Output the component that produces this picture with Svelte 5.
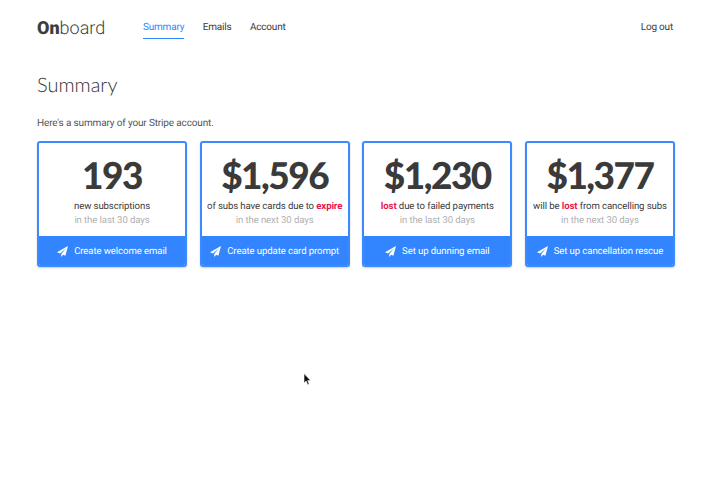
<script>
    const cards = [
        { value: '193', before: 'new subscriptions', hot: '', after: '', when: 'in the last 30 days', action: 'Create welcome email' },
        { value: '$1,596', before: 'of subs have cards due to ', hot: 'expire', after: '', when: 'in the next 30 days', action: 'Create update card prompt' },
        { value: '$1,230', before: '', hot: 'lost', after: ' due to failed payments', when: 'in the last 30 days', action: 'Set up dunning email' },
        { value: '$1,377', before: 'will be ', hot: 'lost', after: ' from cancelling subs', when: 'in the next 30 days', action: 'Set up cancellation rescue' }
    ];
</script>

<div class="page">
    <header>
        <div class="logo"><b>On</b>board</div>
        <nav>
            <a class="active" href="#summary">Summary</a>
            <a href="#emails">Emails</a>
            <a href="#account">Account</a>
        </nav>
        <a class="logout" href="#logout">Log out</a>
    </header>

    <h1>Summary</h1>
    <p class="intro">Here's a summary of your Stripe account.</p>

    <div class="cards">
        {#each cards as card}
            <div class="card">
                <div class="body">
                    <div class="value">{card.value}</div>
                    <div class="desc">{card.before}{#if card.hot}<strong>{card.hot}</strong>{/if}{card.after}</div>
                    <div class="when">{card.when}</div>
                </div>
                <div class="action">
                    <svg width="11" height="11" viewBox="0 0 16 16"><path d="M16 0 0 9.2l4.4 1.8L13.6 3 6.2 11.8V16l2.7-3.2 3.3 1.4z" fill="#fff"/></svg>
                    <span>{card.action}</span>
                </div>
            </div>
        {/each}
    </div>

    <svg class="cursor" width="9" height="13" viewBox="0 0 9 13"><path d="M1 .5v9.6l2.2-2 1.5 3.6 1.5-.7-1.5-3.4h3z" fill="#111" stroke="#fff" stroke-width=".6"/></svg>
</div>

<style>
    :global(body) {
        margin: 0;
        background: #fff;
    }

    .page {
        position: relative;
        height: 500px;
        box-sizing: border-box;
        padding: 0 45px 0 37px;
        font-family: Roboto, "Liberation Sans", sans-serif;
        text-rendering: geometricPrecision;
        color: #3a3a3a;
        overflow: hidden;
    }

    header {
        display: flex;
        align-items: center;
        height: 55px;
    }

    .logo {
        width: 106px;
        padding-top: 1px;
        font-size: 18px;
        font-weight: 300;
        color: #3d3d3d;
    }

    .logo b {
        font-weight: 900;
    }

    nav {
        display: flex;
        gap: 18.5px;
    }

    a {
        font-size: 10px;
        letter-spacing: -0.2px;
        line-height: 14px;
        color: #3a3a3a;
        text-decoration: none;
    }

    nav a {
        padding: 5px 0 3px;
        border-bottom: 1px solid transparent;
    }

    nav a.active {
        color: #3385ff;
        border-bottom-color: #3385ff;
    }

    .logout {
        margin-left: auto;
        margin-right: 2px;
    }

    h1 {
        margin: 16px 0 0;
        font-family: Lato, Roboto, sans-serif;
        font-size: 20px;
        line-height: 28px;
        font-weight: 300;
        color: #333;
    }

    .intro {
        margin: 18px 0 0;
        font-size: 10px;
        letter-spacing: -0.15px;
        line-height: 14px;
        color: #555;
    }

    .cards {
        display: grid;
        grid-template-columns: repeat(4, 150px);
        justify-content: space-between;
        margin-top: 10px;
        font-size: 9.6px;
        letter-spacing: -0.1px;
    }

    .card {
        height: 126px;
        display: flex;
        flex-direction: column;
        box-sizing: border-box;
        border: 2px solid #3b8aff;
        border-radius: 3px;
        overflow: hidden;
        box-shadow: 0 1px 2px rgba(0, 0, 0, 0.2);
    }

    .body {
        flex: 1;
        min-height: 0;
        text-align: center;
    }

    .value {
        margin-top: 12px;
        font-family: Lato, Roboto, sans-serif;
        font-size: 37px;
        line-height: 40px;
        font-weight: 900;
        letter-spacing: -1.5px;
        color: #3a3a3a;
    }

    .desc {
        margin-top: 5px;
        line-height: 14px;
        white-space: nowrap;
        color: #3a3a3a;
    }

    .desc strong {
        color: #e8174f;
        font-weight: 700;
    }

    .when {
        line-height: 14px;
        color: #b0b0b0;
    }

    .action {
        height: 28px;
        flex: none;
        display: flex;
        align-items: center;
        justify-content: center;
        gap: 6px;
        padding-top: 1px;
        background: #3385ff;
        color: #fff;
    }

    .cursor {
        position: absolute;
        left: 303px;
        top: 373px;
    }
</style>
